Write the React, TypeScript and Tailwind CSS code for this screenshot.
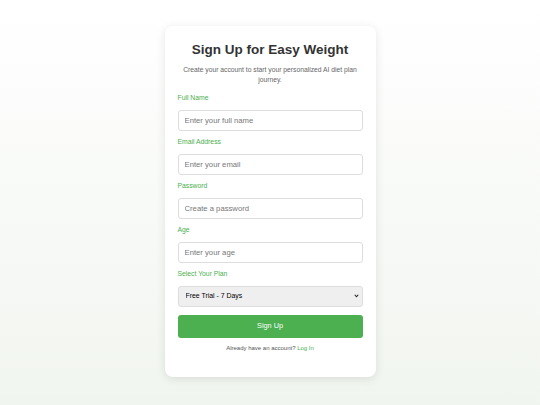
import { useState } from 'react';

type Field = { label: string; type: string; placeholder: string };

const FIELDS: Field[] = [
  { label: 'Full Name', type: 'text', placeholder: 'Enter your full name' },
  { label: 'Email Address', type: 'email', placeholder: 'Enter your email' },
  { label: 'Password', type: 'password', placeholder: 'Create a password' },
  { label: 'Age', type: 'number', placeholder: 'Enter your age' },
];

export default function App() {
  const [plan, setPlan] = useState('trial');

  return (
    <div
      className="flex min-h-screen justify-center bg-gradient-to-b from-white to-[#f1f5ef] pt-[26px]"
      style={{ fontFamily: '"Liberation Sans", Arial, sans-serif' }}
    >
      <div className="h-fit w-[211px] rounded-[8px] bg-white px-[13px] pt-[16px] pb-[24px] shadow-[0_2px_10px_rgba(0,0,0,0.1)]">
        {/* Header */}
        <h1 className="text-center text-[13.5px] leading-[16px] font-bold text-[#333]">Sign Up for Easy Weight</h1>
        <p className="mt-[7px] text-center text-[6.75px] leading-[9.5px] text-[#666]">
          Create your account to start your personalized AI diet plan journey.
        </p>

        {/* Fields */}
        <form className="mt-[9px]" onSubmit={(e) => e.preventDefault()}>
          {FIELDS.map((f) => (
            <div key={f.label} className="mb-[6.5px]">
              <label className="block text-[6.8px] leading-[9px] text-[#4caf50]">{f.label}</label>
              <input
                type={f.type}
                placeholder={f.placeholder}
                className="mt-[7.5px] block h-[21px] w-full rounded-[3px] border border-[#ddd] bg-white px-[6px] text-[7.7px] text-[#333] placeholder:text-[#777] focus:outline-none"
              />
            </div>
          ))}

          <div>
            <label className="block text-[6.8px] leading-[9px] text-[#4caf50]">Select Your Plan</label>
            <div className="relative mt-[7.5px]">
              <select
                value={plan}
                onChange={(e) => setPlan(e.target.value)}
                className="block h-[21px] w-full appearance-none rounded-[3px] border border-[#ddd] bg-[#efefef] px-[7px] text-[6.9px] text-black focus:outline-none"
              >
                <option value="trial">Free Trial - 7 Days</option>
                <option value="monthly">Monthly Plan</option>
                <option value="yearly">Yearly Plan</option>
              </select>
              <svg className="pointer-events-none absolute top-[8.5px] right-[4px] h-[4px] w-[5px]" viewBox="0 0 10 8" fill="none">
                <path d="M1.5 1.5 5 5.5 8.5 1.5" stroke="#222" strokeWidth="2.2" />
              </svg>
            </div>
          </div>

          <button
            type="submit"
            className="mt-[8.5px] block h-[23px] w-full rounded-[3px] bg-[#4caf50] text-[7.3px] text-white"
          >
            Sign Up
          </button>
        </form>

        <p className="mt-[5.5px] text-center text-[6px] leading-[9px] text-[#555]">
          Already have an account? <a href="#" className="text-[#4caf50]">Log In</a>
        </p>
      </div>
    </div>
  );
}
